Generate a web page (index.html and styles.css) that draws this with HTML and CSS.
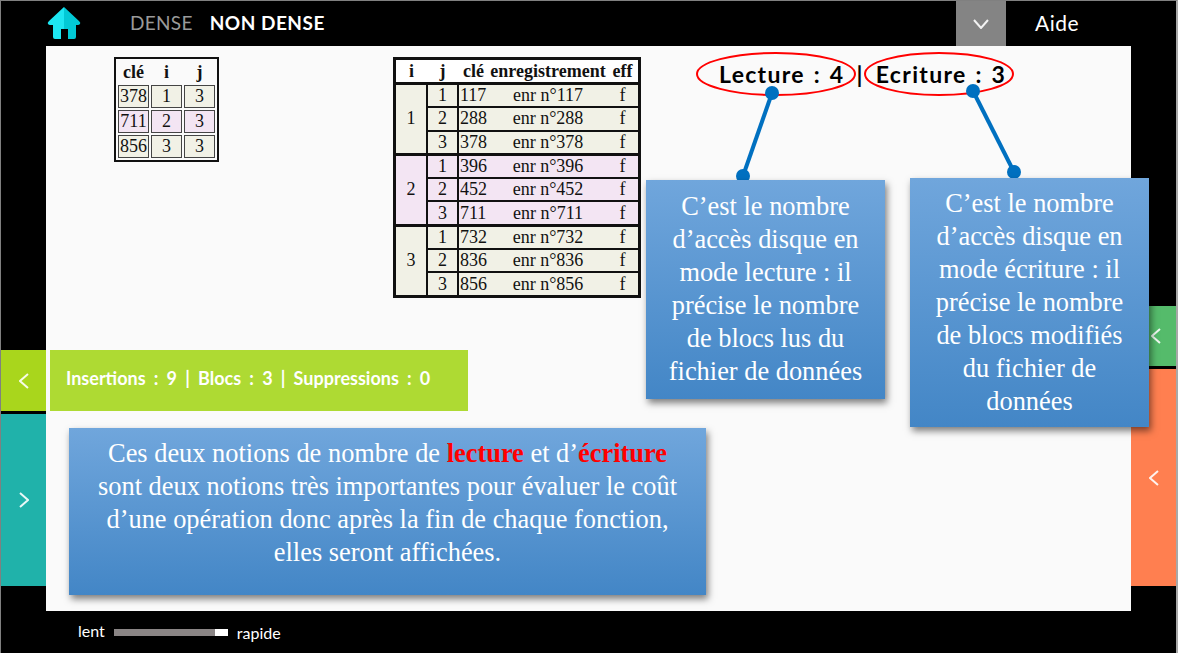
FILE: index.html
```html
<!DOCTYPE html>
<html lang="fr">

<head>
    <meta charset="UTF-8">
    <meta name="viewport" content="width=device-width, initial-scale=1.0">
    <title>Index non dense</title>
    <link rel="stylesheet" href="styles.css">
</head>

<body>
    <div class="app">
        <header class="topbar">
            <svg class="home" viewBox="0 0 32 32" width="32" height="32">
                <path d="M16 0 L1 14 Q-1 16 0 17 Q1 18 2 18 L5 18 L5 30 Q5 32 7 32 L13 32 L13 22 L16 22 Z" fill="#1de6f2" />
                <path d="M16 0 L31 14 Q33 16 32 17 Q31 18 30 18 L28 18 L28 30 Q28 32 26 32 L20 32 L20 22 L16 22 Z" fill="#02c9d6" />
            </svg>
            <nav class="modes">
                <span class="mode">DENSE</span>
                <span class="mode mode-active">NON DENSE</span>
            </nav>
            <div class="dropdown">
                <svg viewBox="0 0 16 10" width="16" height="10">
                    <path d="M1 1 L8 9 L15 1" class="chevron" />
                </svg>
            </div>
            <div class="help">Aide</div>
        </header>

        <div class="middle">
            <aside class="rail">
                <div class="rail-btn rail-lime">
                    <svg viewBox="0 0 10 16" width="10" height="16"><path d="M9 1 L1 8 L9 15" class="chevron" /></svg>
                </div>
                <div class="rail-btn rail-teal">
                    <svg viewBox="0 0 10 16" width="10" height="16"><path d="M1 1 L9 8 L1 15" class="chevron" /></svg>
                </div>
            </aside>

            <main class="stage">
                <div class="tables">
                    <table class="small-table">
                        <tr><th>clé</th><th>i</th><th>j</th></tr>
                        <tr class="beige"><td>378</td><td>1</td><td>3</td></tr>
                        <tr class="mauve"><td>711</td><td>2</td><td>3</td></tr>
                        <tr class="beige"><td>856</td><td>3</td><td>3</td></tr>
                    </table>

                    <table class="big-table">
                        <thead>
                            <tr><th>i</th><th>j</th><th>clé</th><th>enregistrement</th><th>eff</th></tr>
                        </thead>
                        <tbody class="beige">
                            <tr><td rowspan="3" class="num">1</td><td class="num">1</td><td class="key">117</td><td>enr n°117</td><td>f</td></tr>
                            <tr><td class="num">2</td><td class="key">288</td><td>enr n°288</td><td>f</td></tr>
                            <tr><td class="num">3</td><td class="key">378</td><td>enr n°378</td><td>f</td></tr>
                        </tbody>
                        <tbody class="mauve">
                            <tr><td rowspan="3" class="num">2</td><td class="num">1</td><td class="key">396</td><td>enr n°396</td><td>f</td></tr>
                            <tr><td class="num">2</td><td class="key">452</td><td>enr n°452</td><td>f</td></tr>
                            <tr><td class="num">3</td><td class="key">711</td><td>enr n°711</td><td>f</td></tr>
                        </tbody>
                        <tbody class="beige">
                            <tr><td rowspan="3" class="num">3</td><td class="num">1</td><td class="key">732</td><td>enr n°732</td><td>f</td></tr>
                            <tr><td class="num">2</td><td class="key">836</td><td>enr n°836</td><td>f</td></tr>
                            <tr><td class="num">3</td><td class="key">856</td><td>enr n°856</td><td>f</td></tr>
                        </tbody>
                    </table>
                </div>

                <div class="stats">Insertions : 9 | Blocs : 3 | Suppressions : 0</div>

                <div class="callout callout-wide">
                    Ces deux notions de nombre de <b class="hl">lecture</b> et d’<b class="hl">écriture</b><br>
                    sont deux notions très importantes pour évaluer le coût<br>
                    d’une opération donc après la fin de chaque fonction,<br>
                    elles seront affichées.
                </div>

                <!-- annotations over the slide -->
                <div class="counters">
                    <span>Lecture : 4</span>
                    <span class="sep">|</span>
                    <span>Ecriture : 3</span>
                </div>
                <svg class="marks" viewBox="0 0 1133 300" width="1133" height="300">
                    <ellipse cx="730" cy="28" rx="79" ry="21" class="ring" />
                    <ellipse cx="893" cy="28" rx="74" ry="21" class="ring" />
                    <path d="M726 47 L697 130" class="wire" />
                    <path d="M927 45 L968 126" class="wire" />
                    <circle cx="726" cy="47" r="7" class="dot" />
                    <circle cx="697" cy="130" r="7" class="dot" />
                    <circle cx="927" cy="45" r="7" class="dot" />
                    <circle cx="968" cy="126" r="7" class="dot" />
                </svg>
                <div class="callout callout-read">
                    C’est le nombre<br>d’accès disque en<br>mode lecture : il<br>précise le nombre<br>de blocs lus du<br>fichier de données
                </div>
                <div class="callout callout-write">
                    C’est le nombre<br>d’accès disque en<br>mode écriture : il<br>précise le nombre<br>de blocs modifiés<br>du fichier de<br>données
                </div>
            </main>

            <aside class="rail">
                <div class="rail-btn rail-green">
                    <svg viewBox="0 0 10 16" width="10" height="16"><path d="M9 1 L1 8 L9 15" class="chevron" /></svg>
                </div>
                <div class="rail-btn rail-orange">
                    <svg viewBox="0 0 10 16" width="10" height="16"><path d="M9 1 L1 8 L9 15" class="chevron" /></svg>
                </div>
            </aside>
        </div>

        <footer class="bottombar">
            <span class="speed speed-slow">lent</span>
            <div class="slider"><div class="slider-thumb"></div></div>
            <span class="speed">rapide</span>
        </footer>
    </div>
</body>

</html>
```

FILE: styles.css
```css
/* Global Styles */
html,
body {
    margin: 0;
    padding: 0;
    height: 100%;
    background-color: #fff;
    overflow: hidden;
}

.app {
    width: 1175px;
    height: 652px;
    background-color: #000;
    border-top: 1px solid #808080;
    border-left: 1px solid #808080;
    border-right: 2px solid #a8a8a8;
    font-family: 'Lato', sans-serif;
    color: #fff;
    display: flex;
    flex-direction: column;
}

/* Top bar */
.topbar {
    height: 45px;
    display: flex;
    align-items: center;
}

.home {
    margin-left: 47px;
    margin-top: -1px;
    overflow: visible;
}

.modes {
    margin-left: 50px;
    margin-top: -3px;
    display: flex;
    gap: 17px;
    font-size: 19px;
}

.mode {
    color: #9a9a9a;
    letter-spacing: 0.3px;
}

.mode-active {
    color: #fff;
    font-weight: 700;
    letter-spacing: 0.5px;
}

.dropdown {
    width: 50px;
    height: 45px;
    margin-left: auto;
    background-color: #848484;
    display: flex;
    align-items: center;
    justify-content: center;
}

.help {
    width: 170px;
    box-sizing: border-box;
    padding-left: 29px;
    margin-top: -3px;
    font-size: 21px;
    letter-spacing: 0.5px;
}

.chevron {
    fill: none;
    stroke: #fff;
    stroke-width: 2;
    opacity: 0.9;
}

/* Middle */
.middle {
    display: flex;
    height: 565px;
}

.rail {
    width: 45px;
    display: flex;
    flex-direction: column;
    justify-content: flex-end;
    gap: 3px;
    padding-bottom: 25px;
    flex-shrink: 0;
}

.rail-btn {
    display: flex;
    align-items: center;
    justify-content: center;
}

.rail-lime {
    height: 61px;
    background-color: #a9d61c;
}

.rail-teal {
    height: 172px;
    background-color: #20b2aa;
}

.rail-green {
    height: 60px;
    background-color: #55bb6b;
    justify-content: flex-end;
    padding-right: 15px;
}

.rail-orange {
    height: 217px;
    background-color: #ff7f50;
}

.stage {
    flex: 1;
    background-color: #fafafa;
    position: relative;
    color: #000;
}

/* Tables */
.tables {
    display: flex;
    align-items: flex-start;
    padding: 11px 0 0 68px;
    gap: 174px;
    height: 282px;
}

table {
    font-family: 'Liberation Serif', serif;
    color: #111;
}

.small-table {
    border: 2px solid #111;
    border-spacing: 2px;
    font-size: 18px;
    background-color: #fafafa;
}

.small-table th {
    font-size: 18px;
    height: 22px;
    padding: 0;
}

.small-table td {
    width: 29px;
    height: 21px;
    padding: 0;
    border: 1px solid #444;
    text-align: center;
}

.big-table {
    width: 248px;
    border-collapse: collapse;
    border: 3px solid #111;
    font-size: 18px;
    table-layout: fixed;
}

.big-table th {
    font-size: 18px;
    height: 22px;
    padding: 0;
    background-color: #fff;
    white-space: nowrap;
}

.big-table th:nth-child(1),
.big-table th:nth-child(2),
.big-table th:nth-child(3),
.big-table th:nth-child(5) {
    width: 31px;
}

.big-table td {
    height: 21.3px;
    padding: 0;
    text-align: center;
    border-top: 2px solid #111;
}

.big-table tbody {
    border-top: 3px solid #111;
}

.big-table .num {
    border-right: 2px solid #111;
}

.big-table .key {
    text-align: left;
    padding-left: 1px;
}

.beige {
    background-color: #f1f1e6;
}

.mauve {
    background-color: #f3e5f3;
}

/* Stats bar */
.stats {
    width: 418px;
    height: 61px;
    margin: 11px 0 0 4px;
    padding-left: 16px;
    box-sizing: border-box;
    background-color: #aeda33;
    color: #fff;
    font-size: 18px;
    font-weight: 700;
    word-spacing: 3.8px;
    line-height: 56px;
}

/* Callouts */
.callout {
    background: linear-gradient(#70a6dc, #4386c6);
    color: #fff;
    font-family: 'Liberation Serif', serif;
    font-size: 26.4px;
    line-height: 33px;
    text-align: center;
    box-shadow: 2px 4px 7px rgba(0, 0, 0, 0.5);
    box-sizing: border-box;
}

.callout-wide {
    width: 637px;
    height: 167px;
    margin: 17px 0 0 23px;
    padding-top: 9px;
}

.callout-read,
.callout-write {
    position: absolute;
    width: 239px;
}

.callout-read {
    left: 600px;
    top: 134px;
    height: 219px;
    padding-top: 10px;
}

.callout-write {
    left: 864px;
    top: 132px;
    height: 249px;
    padding-top: 9px;
}

.hl {
    color: #f00;
}

/* Annotations */
.counters {
    position: absolute;
    left: 673px;
    top: 14px;
    display: flex;
    gap: 12px;
    font-size: 23px;
    font-weight: 700;
    letter-spacing: 1.3px;
    word-spacing: 2px;
    white-space: nowrap;
}

.marks {
    position: absolute;
    left: 0;
    top: 0;
    pointer-events: none;
}

.ring {
    fill: none;
    stroke: #f00;
    stroke-width: 2;
}

.wire {
    stroke: #0070c0;
    stroke-width: 4;
}

.dot {
    fill: #0070c0;
}

/* Bottom bar */
.bottombar {
    flex: 1;
    display: flex;
    align-items: center;
    padding-left: 77px;
    font-size: 16px;
}

.speed-slow {
    margin-top: -3px;
}

.slider {
    width: 114px;
    height: 7px;
    margin: 0 9px 0 9px;
    background-color: #8a8585;
    display: flex;
    justify-content: flex-end;
}

.slider-thumb {
    width: 13px;
    background-color: #fff;
}
```
